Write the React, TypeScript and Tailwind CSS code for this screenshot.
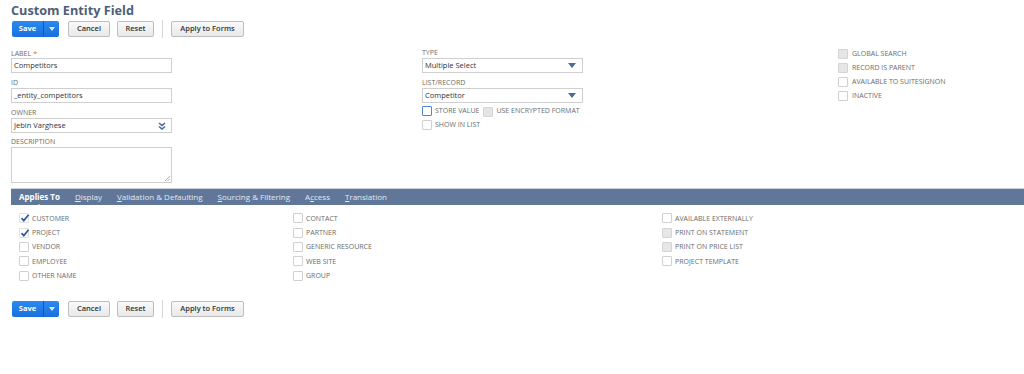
import clsx from "clsx";

type BoxState = "empty" | "checked" | "disabled" | "focus";

function Box({ state = "empty" }: { state?: BoxState }) {
  return (
    <span
      className={clsx(
        "relative inline-block h-[10px] w-[10px] shrink-0 rounded-[1px] border",
        state === "disabled" && "border-[#d4d4d4] bg-[#e6e6e6]",
        state === "empty" && "border-[#d0d0d0] bg-white",
        state === "checked" && "border-[#e2e2e2] bg-white",
        state === "focus" && "border-[1.5px] border-[#4a86d4] bg-white",
      )}
    >
      {state === "checked" ? (
        <svg viewBox="0 0 10 10" className="absolute left-[0px] top-[-1px] h-[10px] w-[10px]">
          <path d="M1.5 5.2 L3.8 7.6 L8.6 1.8" fill="none" stroke="#2f5a9c" strokeWidth="1.7" />
        </svg>
      ) : null}
    </span>
  );
}

function Check({ label, state }: { label: string; state?: BoxState }) {
  return (
    <div className="flex h-[14.4px] items-center">
      <Box state={state} />
      <span className="ml-[3px] text-[7px] uppercase leading-none text-[#6b6b6b]">{label}</span>
    </div>
  );
}

function FieldLabel({ children }: { children: React.ReactNode }) {
  return <div className="h-[11px] text-[7px] leading-[11px] uppercase text-[#6b6b6b]">{children}</div>;
}

function Arrow() {
  return (
    <svg viewBox="0 0 8 5" className="h-[5px] w-[8px]">
      <path d="M0 0 H8 L4 5 Z" fill="#4d6a9c" />
    </svg>
  );
}

function Select({ value, chevron = false }: { value: string; chevron?: boolean }) {
  return (
    <div className="flex h-[15px] w-[161px] items-center justify-between border border-[#cfcfcf] bg-white pl-[2px] pr-[6px] text-[7.5px] text-[#333]">
      <span>{value}</span>
      {chevron ? (
        <svg viewBox="0 0 8 8" className="mr-[-1px] h-[8px] w-[8px]">
          <path d="M1 1 L4 3.5 L7 1 M1 4.5 L4 7 L7 4.5" fill="none" stroke="#4d6a9c" strokeWidth="1.6" />
        </svg>
      ) : (
        <Arrow />
      )}
    </div>
  );
}

function Input({ value }: { value: string }) {
  return (
    <div className="flex h-[15px] w-[161px] items-center border border-[#cfcfcf] bg-white pl-[2px] text-[7.5px] text-[#333]">
      {value}
    </div>
  );
}

function GrayButton({ children, w }: { children: React.ReactNode; w: string }) {
  return (
    <div
      className={clsx(
        "flex h-[16px] items-center justify-center rounded-[2px] border border-[#bdbdbd] bg-gradient-to-b from-[#f9f9f9] to-[#e9e9e9] text-[7.5px] font-semibold text-[#333]",
        w,
      )}
    >
      {children}
    </div>
  );
}

function ButtonRow() {
  return (
    <div className="flex h-[16px] items-center">
      <div className="ml-[1px] flex h-[16px] w-[47px] overflow-hidden rounded-[2px] bg-gradient-to-b from-[#2a8af0] to-[#1a6fdc] text-white">
        <div className="flex w-[31px] items-center justify-center text-[7.5px] font-bold">Save</div>
        <div className="w-px bg-[#1559b8]" />
        <div className="flex flex-1 items-center justify-center">
          <svg viewBox="0 0 6 4" className="h-[4px] w-[6px]">
            <path d="M0 0 H6 L3 4 Z" fill="#dbe9fb" />
          </svg>
        </div>
      </div>
      <div className="ml-[9px]">
        <GrayButton w="w-[42px]">Cancel</GrayButton>
      </div>
      <div className="ml-[7px]">
        <GrayButton w="w-[37px]">Reset</GrayButton>
      </div>
      <div className="mx-[8px] h-[18px] w-px bg-[#d6d6d6]" />
      <GrayButton w="w-[73px]">Apply to Forms</GrayButton>
    </div>
  );
}

const tabs = [
  { pre: "", key: "D", post: "isplay" },
  { pre: "", key: "V", post: "alidation & Defaulting" },
  { pre: "", key: "S", post: "ourcing & Filtering" },
  { pre: "A", key: "c", post: "cess" },
  { pre: "", key: "T", post: "ranslation" },
];

export default function App() {
  return (
    <div className="h-[374px] w-[1024px] overflow-hidden bg-white pl-[11px] font-['Open_Sans',sans-serif]">
      <h1 className="h-[21px] text-[12.7px] font-bold leading-[20px] text-[#4d5f79]">Custom Entity Field</h1>
      <ButtonRow />

      <div className="mt-[10px] flex">
        <div className="w-[411px]">
          <FieldLabel>
            Label <span className="text-[8px] text-[#d9822b]">*</span>
          </FieldLabel>
          <Input value="Competitors" />
          <div className="mt-[4px]">
            <FieldLabel>ID</FieldLabel>
            <Input value="_entity_competitors" />
          </div>
          <div className="mt-[4px]">
            <FieldLabel>Owner</FieldLabel>
            <Select value="Jebin Varghese" chevron />
          </div>
          <div className="mt-[3px]">
            <FieldLabel>Description</FieldLabel>
            <div className="relative h-[36px] w-[161px] border border-[#cfcfcf] bg-white">
              <svg viewBox="0 0 6 6" className="absolute bottom-[1px] right-[1px] h-[6px] w-[6px]">
                <path d="M1 6 L6 1 M3.5 6 L6 3.5" stroke="#999" strokeWidth="0.8" />
              </svg>
            </div>
          </div>
        </div>

        <div className="w-[416px]">
          <FieldLabel>Type</FieldLabel>
          <Select value="Multiple Select" />
          <div className="mt-[4px]">
            <FieldLabel>List/Record</FieldLabel>
            <Select value="Competitor" />
          </div>
          <div className="mt-[1px] flex h-[14px] items-center">
            <Box state="focus" />
            <span className="ml-[3px] text-[7px] uppercase text-[#6b6b6b]">Store Value</span>
            <span className="ml-[4px]">
              <Box state="disabled" />
            </span>
            <span className="ml-[3px] text-[7px] uppercase text-[#6b6b6b]">Use Encrypted Format</span>
          </div>
          <div className="flex h-[14px] items-center">
            <Box state="empty" />
            <span className="ml-[3px] text-[7px] uppercase text-[#6b6b6b]">Show in List</span>
          </div>
        </div>

        <div className="flex flex-col">
          {[
            ["Global Search", "disabled"],
            ["Record is Parent", "disabled"],
            ["Available to SuiteSignOn", "empty"],
            ["Inactive", "empty"],
          ].map(([l, s]) => (
            <div key={l} className="flex h-[14px] items-center">
              <Box state={s as BoxState} />
              <span className="ml-[4px] text-[7px] uppercase text-[#6b6b6b]">{l}</span>
            </div>
          ))}
        </div>
      </div>

      <div className="mt-[5px] flex h-[17px] items-center gap-[15px] border-t border-[#c8d1de] bg-[#607799] pl-[8px] text-[8px] text-[#e4e9f1]">
        <span className="relative font-bold text-white">
          Applies To
          <span className="absolute bottom-[-4px] left-1/2 ml-[-3px] h-0 w-0 border-x-[3px] border-b-[3px] border-x-transparent border-b-white" />
        </span>
        {tabs.map((t) => (
          <span key={t.post}>
            {t.pre}
            <span className="underline">{t.key}</span>
            {t.post}
          </span>
        ))}
      </div>

      <div className="mt-[6px] flex pl-[8px]">
        <div className="w-[274px]">
          <Check label="Customer" state="checked" />
          <Check label="Project" state="checked" />
          <Check label="Vendor" />
          <Check label="Employee" />
          <Check label="Other Name" />
        </div>
        <div className="w-[369px]">
          <Check label="Contact" />
          <Check label="Partner" />
          <Check label="Generic Resource" />
          <Check label="Web Site" />
          <Check label="Group" />
        </div>
        <div>
          <Check label="Available Externally" />
          <Check label="Print on Statement" state="disabled" />
          <Check label="Print on Price List" state="disabled" />
          <Check label="Project Template" />
        </div>
      </div>

      <div className="mt-[18px]">
        <ButtonRow />
      </div>
    </div>
  );
}
